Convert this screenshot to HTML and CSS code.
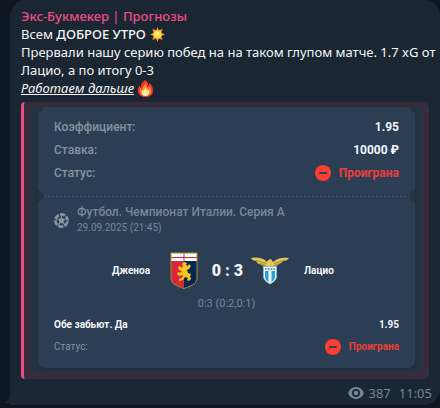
FILE: index.html
```html
<!DOCTYPE html>
<html lang="ru">
<head>
    <meta charset="UTF-8">
    <meta name="viewport" content="width=device-width, initial-scale=1.0">
    <title>Экс-Букмекер | Прогнозы</title>
    <link rel="stylesheet" href="styles.css">
</head>
<body>
    <article class="message">
        <svg class="tail" viewBox="0 0 10 12" aria-hidden="true"><path d="M10 0v12H0C6 10 10 6 10 0z"/></svg>
        <h1>Экс-Букмекер | Прогнозы</h1>
        <p class="text">
            Всем <b>ДОБРОЕ УТРО</b>
            <svg class="emoji" viewBox="0 0 18 18" role="img" aria-label="Солнце">
                <path fill="#f39b22" d="M9 1l1.300 3.600L14.400 3.300l-1.500 3.900L17 9l-4.100 1.700 1.500 4-4.100-1.500L9 17l-1.500-3.800-4 1.500 1.500-4L1 9l4-1.800-1.500-3.900 4 1.300z"/>
                <circle cx="9" cy="9" r="4.300" fill="#ffd83d"/>
                <circle cx="8.500" cy="8" r="2.300" fill="#ffed8a"/>
            </svg>
            <br>
            Прервали нашу серию побед на на таком глупом матче. 1.7 xG от Лацио, а по итогу 0-3
            <br>
            <a href="#"><i>Работаем дальше</i></a>
            <svg class="emoji" viewBox="0 0 18 18" role="img" aria-label="Огонь">
                <path fill="#f4342c" d="M8.500 0c3 1.500 3.500 4 3.500 5.500 1-.5 1.200-1.500 1-2.500 2.500 2 4 5 4 8 0 4-3 7-8 7s-8-3-8-7c0-2 .5-4 1.500-5.500.2 1.500.7 2 1.500 2.500C4 5 5 2.500 8.500 0z"/>
                <path fill="#ff8b3a" d="M9 3c1 2 1 3.500 2 5.500.8-.4 1.400-1 1.500-2 1.500 1.500 2.500 3.200 2.500 5 0 3.500-2.500 5.500-6 5.500s-6-2-6-5.500c0-1 .2-2 .8-3 .4 1 .9 1.300 1.700 1.500C5.500 7.500 8 6 9 3z"/>
                <path fill="#ffe9a0" d="M9 8c.3 1.500 1.500 2 1.700 3.200.6-.2.9-.6 1-1.200 1 1 1.300 2 1.300 3 0 2.500-1.700 4-4 4s-4-1.500-4-4c0-.8.200-1.500.6-2 .3.500.7.800 1.200.8C7 10.500 8.500 9.500 9 8z"/>
            </svg>
        </p>

        <div class="preview">
            <div class="photo">
                <section class="ticket">
                    <dl class="summary">
                        <div class="row"><dt>Коэффициент:</dt><dd>1.95</dd></div>
                        <div class="row"><dt>Ставка:</dt><dd>10000 ₽</dd></div>
                        <div class="row"><dt>Статус:</dt>
                            <dd class="lost"><svg class="minus" viewBox="0 0 16 16" aria-hidden="true"><circle cx="8" cy="8" r="8" fill="#fe3d33"/><rect x="4" y="7" width="8" height="2" rx="1" fill="#2b3e53"/></svg>Проиграна</dd>
                        </div>
                    </dl>
                    <div class="divider"></div>
                    <div class="event">
                        <div class="league">
                            <svg class="ball" viewBox="0 0 16 16" aria-hidden="true">
                                <circle cx="8" cy="8" r="6.500" fill="none" stroke="#8693a1" stroke-width="2.800" stroke-dasharray="5.600 1.207" stroke-dashoffset="-1"/>
                                <path fill="#8693a1" d="M8 4.600l3.300 2.400-1.200 3.800H5.900L4.700 7z"/>
                                <path stroke="#8693a1" stroke-width="1.200" d="M8 5V2M11 7l3-1M10 10.500l1.700 2.500M6 10.500L4.300 13M5 7L2 6"/>
                            </svg>
                            <div>
                                <h2>Футбол. Чемпионат Италии. Серия А</h2>
                                <time>29.09.2025 (21:45)</time>
                            </div>
                        </div>
                        <div class="match">
                            <span class="team home">Дженоа</span>
                            <svg class="crest" viewBox="0 0 28 38" role="img" aria-label="Дженоа">
                                <path fill="#fff" d="M1 1h26v9H1z"/>
                                <path fill="#d9283b" d="M1 9h13v27C7 34 1 32 1 26z"/>
                                <path fill="#062653" d="M14 9h13v17c0 6-6 8-13 10z"/>
                                <path stroke="#d9283b" d="M14 1v8M1 5.500h26"/>
                                <path fill="#f4c51c" d="M14 10l3 1-1 2 2 1 1-2 2 2-2 3-2 1 1 3 3 1-1 2 1 3-2 2-2-1 1-2-3-1-2 3-4 1v-2l3-1 1-3-4 1-2-2 1-2 2 1 2-2-3-1-1-3 2-1 2 2 1-2-1-2z"/>
                                <path fill="none" stroke="#a88e35" d="M1 1h26v25c0 6-6 8-13 10.500C7 34 1 32 1 26z"/>
                            </svg>
                            <strong class="score">0 : 3</strong>
                            <svg class="crest eagle" viewBox="0 0 38 28" role="img" aria-label="Лацио">
                                <path fill="#e3c55b" d="M0 1c6-1 12-.5 16 4l1-2 3-1 2 3c4-4 10-5 16-4-1 2-4 3-6 3-1 2-3 2-4 3-2 2-4 2-6 2l-2 2h-3l-2-2c-3 0-5-1-6-2-2 0-3-1-4-3C3 4 1 3 0 1z"/>
                                <path fill="none" stroke="#a98a32" d="M5 3.500l10 3M9 6.500l6 2M33 3.500l-10 3M29 6.500l-6 2"/>
                                <path fill="#f2f7fa" stroke="#8cbcd9" d="M12.500 9.500h13V19c0 4-3 6-6.500 8-3.500-2-6.500-4-6.500-8z"/>
                                <path fill="#299fd8" d="M14 14h3.500v11c-2-1-3.500-3-3.500-6zM20.500 14H24v5c0 3-1.500 5-3.500 6z"/>
                                <path stroke="#547c99" stroke-width="1.500" stroke-dasharray="1 .5" d="M14 12h10"/>
                            </svg>
                            <span class="team">Лацио</span>
                        </div>
                        <p class="periods">0:3 (0:2,0:1)</p>
                        <dl class="bet">
                            <div class="row"><dt class="pick">Обе забьют. Да</dt><dd>1.95</dd></div>
                            <div class="row"><dt>Статус:</dt>
                                <dd class="lost"><svg class="minus" viewBox="0 0 16 16" aria-hidden="true"><circle cx="8" cy="8" r="8" fill="#fe3d33"/><rect x="4" y="7" width="8" height="2" rx="1" fill="#2b3e53"/></svg>Проиграна</dd>
                            </div>
                        </dl>
                    </div>
                </section>
            </div>
        </div>

        <footer class="meta">
            <svg class="eye" viewBox="0 0 16 12" aria-hidden="true">
                <path fill="#70869a" fill-rule="evenodd" d="M8 0c3.500 0 6.500 2.200 8 6-1.500 3.800-4.500 6-8 6S1.500 9.800 0 6c1.500-3.800 4.500-6 8-6zm0 2a4 4 0 100 8 4 4 0 000-8z"/>
                <circle cx="8" cy="6" r="2.300" fill="#70869a"/>
            </svg>
            <span>387</span>
            <time>11:05</time>
        </footer>
    </article>
</body>
</html>
```
FILE: styles.css
```css
* {
    box-sizing: border-box;
}
body {
    margin: 0;
    padding: 0 0 3px 10px;
    background-color: #0e1621;
    font-family: "Noto Sans", "Open Sans", sans-serif;
    font-size: 13px;
    line-height: 18px;
    color: #f5f5f5;
}
h1, h2, p, dl, dd {
    margin: 0;
}
svg {
    display: block;
    flex: none;
}
.message {
    position: relative;
    padding: 7px 8px 3px 11px;
    background-color: #1a2733;
    border-radius: 16px 16px 16px 0;
}
.tail {
    position: absolute;
    left: -7px;
    bottom: 0;
    width: 7px;
    height: 12px;
    fill: #1a2733;
}
h1 {
    font-size: 13px;
    font-weight: 500;
    color: #ee4d83;
}
.text {
    margin-right: -6px;
}
.text b {
    font-weight: 500;
}
.text a {
    color: inherit;
}
.emoji {
    display: inline-block;
    width: 17px;
    height: 17px;
    margin: -4px 0 -2px;
    vertical-align: -2px;
}

/* Цитата с купоном */
.preview {
    margin: 5px 3px 0 0;
    padding: 5px 7px 7px;
    border-left: 3px solid #ee4d83;
    border-radius: 4px 6px 6px 4px;
    background-color: #382b3c;
}
.photo {
    padding: 0 7px 4px;
    background-color: #243342;
}
.ticket {
    padding: 8px 16px 10px;
    background:
        radial-gradient(circle at 0 0, #243342 5px, transparent 6px),
        radial-gradient(circle at 100% 0, #243342 5px, transparent 6px),
        #2b3e53;
    border-radius: 0 0 7px 7px;
    box-shadow: 0 1px 3px #1f2c3a;
    font-family: Roboto, sans-serif;
    color: #f1f5f9;
}
.row {
    display: flex;
    justify-content: space-between;
    align-items: center;
}
.summary {
    font-size: 12px;
    font-weight: 500;
}
.summary .row {
    height: 23px;
}
dt {
    color: #8693a1;
}
dd {
    display: flex;
    align-items: center;
    font-weight: 700;
}
.lost {
    gap: 8px;
    color: #ed3f3b;
}
.minus {
    width: 16px;
    height: 16px;
}
.divider {
    height: 12px;
    margin: 6px -16px 0;
    background:
        radial-gradient(circle at 0 50%, #243342 5px, transparent 6px),
        radial-gradient(circle at 100% 50%, #243342 5px, transparent 6px),
        repeating-linear-gradient(90deg, #41546a 0 2px, transparent 2px 4px) center / calc(100% - 12px) 1px no-repeat;
}
.league {
    display: flex;
    align-items: center;
    gap: 8px;
    padding-top: 2px;
    color: #78889a;
}
.league h2 {
    font-size: 12px;
    font-weight: 500;
    line-height: 16px;
}
.league time {
    display: block;
    font-size: 10px;
    line-height: 16px;
}
.ball {
    width: 15px;
    height: 15px;
}
.match {
    display: grid;
    grid-template-columns: 1fr 28px 53px 38px 1fr;
    align-items: center;
    margin-top: 16px;
    padding-left: 6px;
    font-size: 10px;
    font-weight: 700;
}
.crest {
    width: 28px;
    height: 38px;
}
.eagle {
    width: 38px;
    height: 28px;
}
.home {
    justify-self: end;
    margin-right: 20px;
}
.match .team:last-child {
    margin-left: 15px;
}
.score {
    padding-right: 8px;
    font-size: 16px;
    text-align: right;
}
.periods {
    margin-top: 5px;
    font-size: 11px;
    text-align: center;
    color: #78889a;
}
.bet {
    padding-top: 1px;
    font-size: 10px;
}
.bet .row {
    height: 22px;
}
.pick {
    font-weight: 700;
    color: #f1f5f9;
}

.meta {
    display: flex;
    justify-content: flex-end;
    align-items: center;
    padding-top: 5px;
    gap: 4px;
    color: #70869a;
}
.meta time {
    margin-left: 4px;
}
.eye {
    width: 16px;
    height: 12px;
}
```
